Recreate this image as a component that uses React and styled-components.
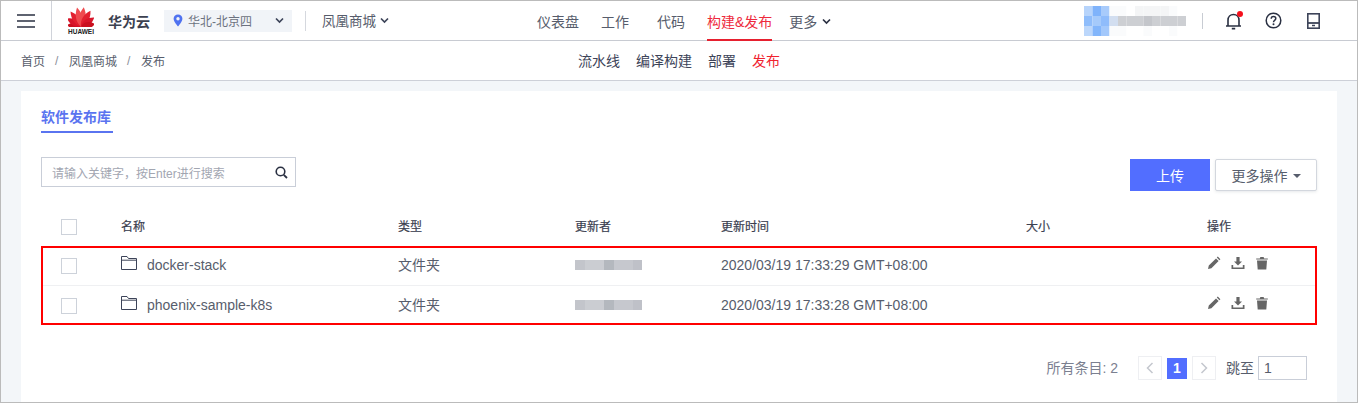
import React from 'react';
import styled, { createGlobalStyle } from 'styled-components';

const Global = createGlobalStyle`
  html, body { margin: 0; padding: 0; background: #fff; }
  * { box-sizing: border-box; }
  body { font-family: "Liberation Sans", "Noto Sans CJK SC", sans-serif; color: #575d6c; }
`;

const Page = styled.div`
  position: relative; width: 1358px; height: 403px; overflow: hidden;
  border: 1px solid #bbbbbb;
  background: #f3f6f9; display: flex; flex-direction: column;
`;
const TopBar = styled.header`
  height: 40px; flex: none; background: #fff; border-bottom: 1px solid #c8cbd2; display: flex; align-items: center;
`;
const MenuCell = styled.div`
  width: 51px; height: 39px; border-right: 1px solid #d0d3da; display: flex; align-items: center; justify-content: center; flex: none;
`;
const LeftZone = styled.div`
  width: 485px; flex: none; display: flex; align-items: center; padding-left: 16px;
`;
const Logo = styled.div`
  width: 26px; display: flex; flex-direction: column; align-items: center; margin-top: 1px;
`;
const LogoWord = styled.span`
  font-size: 6.5px; line-height: 7px; font-weight: 700; color: #222; margin-top: 1px; white-space: nowrap;
`;
const Brand = styled.span`
  font-size: 14px; font-weight: 700; color: #3c4150; margin-left: 14px; width: 56px;
`;
const Region = styled.div`
  width: 128px; height: 22px; background: #f1f4f8; display: flex; align-items: center; padding: 0 8px 0 9px;
  font-size: 12px; color: #6c7280; gap: 5px;
`;
const RegionName = styled.span`flex: 1;`;
const VLine = styled.span`
  width: 1px; height: 20px; background: #d5d8de; margin-left: 13px; flex: none;
`;
const Project = styled.div`
  margin-left: 16px; font-size: 13.5px; color: #575d6c; display: flex; align-items: center; gap: 4px; padding-bottom: 1px;
`;
const MainNav = styled.nav`
  display: flex; align-items: stretch; height: 39px; flex: none;
`;
const NavItem = styled.a`
  font-size: 14px; margin-right: ${p => p.$gap}px; color: ${p => p.$active ? '#ee2a3d' : '#575d6c'};
  display: flex; align-items: center; gap: 5px; white-space: nowrap; height: 40px; padding-top: 2px;
  border-bottom: 2px solid ${p => p.$active ? '#e6202f' : 'transparent'};
`;
const RightZone = styled.div`
  margin-left: auto; display: flex; align-items: center; padding-right: 34px;
`;
const Mosaic = styled.svg`display: block; flex: none;`;
const RightLine = styled.span`width: 1px; height: 16px; background: #c8ccd3; margin: 0 20px 0 16px;`;
const IconSlot = styled.span`
  position: relative; width: 20px; height: 20px; margin-right: ${p => p.$gap || 0}px; display: flex; align-items: center; justify-content: center;
`;
const Dot = styled.i`
  position: absolute; top: 0px; right: 0px; width: 6px; height: 6px; border-radius: 50%; background: #f5101c;
`;
const SubBar = styled.div`
  height: 40px; flex: none; background: #fff; border-bottom: 1px solid #cdd0d8; display: flex; align-items: center;
`;
const Crumbs = styled.div`
  width: 577px; padding-left: 20px; flex: none; display: flex; align-items: center; font-size: 12px; color: #575d6c; gap: 10px;
`;
const Sep = styled.span`color: #8a8e99; width: 4px;`;
const SubNav = styled.div`display: flex; gap: 16px; font-size: 14px; color: #3d4459; padding-bottom: 2px;`;
const SubItem = styled.span`color: ${p => p.$active ? '#f0222f' : '#3d4459'};`;
const Card = styled.main`
  margin: 10px 20px 0; background: #fff; flex: 1; padding: 0 20px; display: flex; flex-direction: column;
`;
const Tabs = styled.div`height: 42px; display: flex; align-items: flex-end;`;
const Tab = styled.div`
  width: 72px; height: 32px; padding-top: 6px; font-size: 14px; font-weight: 700; line-height: 20px;
  color: #5a74f0; border-bottom: 2px solid #5a74f0; white-space: nowrap;
`;
const Tools = styled.div`
  display: flex; justify-content: space-between; align-items: flex-start; margin-top: 24px; height: 50px;
`;
const Search = styled.div`
  width: 255px; height: 30px; border: 1px solid #c9ced8; display: flex; align-items: center; justify-content: space-between;
  padding: 0 7px 0 10px; font-size: 12px; color: #a2a6b1;
`;
const Actions = styled.div`display: flex; gap: 5px; margin-top: 2px;`;
const Upload = styled.button`
  width: 80px; height: 32px; background: #526eff; border: 0; color: #fff; font: inherit; font-size: 14px; padding: 0;
`;
const More = styled.button`
  width: 102px; height: 32px; background: #fff; border: 1px solid #d3d7de; border-radius: 2px; color: #575d6c; font: inherit; font-size: 14px; padding: 0;
  display: flex; align-items: center; justify-content: center; gap: 5px; box-shadow: 0 1px 3px rgba(60,70,90,.12);
`;
const Caret = styled.i`
  border-left: 4px solid transparent; border-right: 4px solid transparent; border-top: 4px solid #575d6c; margin-top: 2px;
`;
const Row = styled.div`
  display: grid; grid-template-columns: 80px 277px 177px 146px 305px 181px 110px; align-items: center;
  height: ${p => p.$h}px; font-size: 14px; color: #575d6c;
  ${p => p.$line && 'border-bottom: 1px solid #eff0f2;'}
`;
const HeadCell = styled.div`font-size: 12px; color: #3b4050; -webkit-text-stroke: .2px #3b4050; margin-top: -2px;`;
const BodyCell = styled.div`margin-top: ${p => p.$cjk ? -4 : -2}px;`;
const Check = styled.span`
  display: block; width: 16px; height: 16px; border: 1px solid #cdd2da; margin-left: 20px; background: #fff;
`;
const NameCell = styled.div`display: flex; align-items: center; gap: 10px; margin-top: -2px;`;
const FolderGlyph = styled.svg`margin-top: -4px; flex: none;`;
const OpIcons = styled.div`display: flex; gap: 10px; margin-top: -6px; align-items: center;`;
const Pager = styled.div`
  margin-top: 31px; display: flex; align-items: center; justify-content: flex-end; padding-right: 10px; font-size: 14px; color: #7b8090;
`;
const Total = styled.span`margin: -2px 20px 0 0; font-size: 14px;`;
const PageBtn = styled.span`
  width: 24px; height: 24px; border: 1px solid #eeeff2; display: flex; align-items: center; justify-content: center;
`;
const PageNow = styled.span`
  width: 20px; height: 21px; background: #526eff; color: #fff; font-weight: 700; font-size: 14px; margin: 0 5px; display: flex; align-items: center; justify-content: center;
`;
const JumpLabel = styled.span`margin: -2px 4px 0 10px; color: #575d6c;`;
const JumpBox = styled.span`
  width: 49px; height: 24px; border: 1px solid #c9ced8; display: flex; align-items: center; padding-left: 5px; color: #575d6c; font-size: 14px;
`;
const Annotation = styled.div`
  position: absolute; left: 40px; top: 245px; width: 1276px; height: 79px; border: 2px solid #ff0000; pointer-events: none;
`;

const Chevron = ({ color = '#3d4459' }) => (
  <svg width="9" height="7" viewBox="0 0 9 7" fill="none"><path d="M1 1.500 4.500 5 8 1.500" stroke={color} strokeWidth="1.700" /></svg>
);

const petals = [
  [-82, .72, '#c9101f'], [-58, .82, '#d8152a'], [-33, .94, '#e2202f'], [-10, 1, '#ef4a4e'],
  [10, 1, '#ef4a4e'], [33, .94, '#e2202f'], [58, .82, '#d8152a'], [82, .72, '#c9101f'],
];
const Petals = () => (
  <svg width="26" height="20" viewBox="0 0 26 20">
    {petals.map(([a, k, c]) => (
      <path key={a} transform={`translate(13 19.500) rotate(${a}) scale(1 ${k})`} d="M0 0C-4.600-5.500-4.200-13-.6-19.500 3.800-13 4.600-5.500 0 0Z" fill={c} />
    ))}
  </svg>
);

const Blur = ({ w, h, cw, ch, rows }) => (
  <Mosaic width={w} height={h} viewBox={`0 0 ${w} ${h}`}>
    {rows.map((r, y) => r.map((c, x) => <rect key={`${x}-${y}`} x={x * cw} y={y * ch} width={cw} height={ch} fill={c} />))}
  </Mosaic>
);

const w = '#ffffff', s = '#fafbfc', t = '#f4f5f6', g = '#cdcfd3', h = '#c4c6cb';
const userRows = [
  ['#b7d4fb', '#7fb3fb', '#a8cbfb', s, s, w, t, t, t, t, s, w],
  ['#8fbdfb', '#a5cafb', '#8fbcfb', '#d2def0', g, g, g, h, g, g, g, g],
  ['#bcd7fb', '#83b6fb', '#a3c8fb', s, s, w, w, s, w, w, s, w],
];

const nameBands = [['#c3c5cb', 10], ['#cbcdd2', 19], ['#b4b8be', 10], ['#c6c8ce', 19], ['#bfc1c8', 9]];
const NameBlur = () => {
  let x = 0;
  return (
    <Mosaic width="67" height="10" viewBox="0 0 67 10">
      {nameBands.map(([c, wd]) => {
        const r = <rect key={x} x={x} y="0" width={wd} height="10" fill={c} />;
        x += wd;
        return r;
      })}
    </Mosaic>
  );
};

const Folder = () => (
  <FolderGlyph width="16" height="14" viewBox="0 0 16 14" fill="none">
    <path d="M.5 13.500V.5h5.500l1.500 2h8v11z M.5 4.200h15" stroke="#3d4459" strokeWidth="1" />
  </FolderGlyph>
);
const Pencil = () => (
  <svg width="14" height="14" viewBox="0 0 14 14"><path d="M1 13l.8-3.400L9 2.400l2.600 2.600-7.200 7.200zM9.800 1.600l1-1 2.600 2.600-1 1z" fill="#666" /></svg>
);
const Download = () => (
  <svg width="14" height="14" viewBox="0 0 14 14"><path d="M5.400 1h3.200v4.400H11L7 9.400 3 5.400h2.400z M.5 9h1.700v2.600h9.600V9h1.700v4H.5z" fill="#666" /></svg>
);
const Trash = () => (
  <svg width="14" height="14" viewBox="0 0 14 14"><path d="M2 4.400h10l-.7 9.100H2.700z M1.200 2.400h3.600L5.400 1h3.200l.6 1.400h3.600v1.200H1.200z" fill="#666" /></svg>
);
const Ops = () => <OpIcons><Pencil /><Download /><Trash /></OpIcons>;

const TableRow = ({ name, time, line }) => (
  <Row $h={line ? 40 : 39} $line={line}>
    <Check />
    <NameCell><Folder />{name}</NameCell>
    <BodyCell $cjk>文件夹</BodyCell>
    <BodyCell><NameBlur /></BodyCell>
    <BodyCell>{time}</BodyCell>
    <div />
    <Ops />
  </Row>
);

export default function App() {
  return (
    <Page>
      <Global />
      <TopBar>
        <MenuCell>
          <svg width="18" height="14" viewBox="0 0 18 14"><path d="M0 1h18M0 7h18M0 13h18" stroke="#2a3042" strokeWidth="1.600" /></svg>
        </MenuCell>
        <LeftZone>
          <Logo><Petals /><LogoWord>HUAWEI</LogoWord></Logo>
          <Brand>华为云</Brand>
          <Region>
            <svg width="10" height="13" viewBox="0 0 10 13"><path d="M5 .5C2.400.5.6 2.400.6 4.800.6 7.800 5 12.500 5 12.500s4.400-4.700 4.400-7.700C9.400 2.400 7.600.5 5 .5z" fill="#4f72f0" /><circle cx="5" cy="4.800" r="1.700" fill="#f1f4f8" /></svg>
            <RegionName>华北-北京四</RegionName>
            <Chevron />
          </Region>
          <VLine />
          <Project>凤凰商城<Chevron /></Project>
        </LeftZone>
        <MainNav>
          <NavItem $gap={22}>仪表盘</NavItem>
          <NavItem $gap={28}>工作</NavItem>
          <NavItem $gap={22}>代码</NavItem>
          <NavItem $gap={17} $active>构建&amp;发布</NavItem>
          <NavItem $gap={0}>更多<Chevron color="#2a3042" /></NavItem>
        </MainNav>
        <RightZone>
          <Blur w={102} h={30} cw={8.5} ch={10} rows={userRows} />
          <RightLine />
          <IconSlot $gap={20}>
            <svg width="17" height="18" viewBox="0 0 17 18" fill="none"><path d="M1 14h15M3 14V8.200C3 4.800 5.400 2.500 8.500 2.500S14 4.800 14 8.200V14M6.800 16.600h3.400" stroke="#2a3042" strokeWidth="1.600" /></svg>
            <Dot />
          </IconSlot>
          <IconSlot $gap={20}>
            <svg width="17" height="17" viewBox="0 0 17 17" fill="none"><circle cx="8.500" cy="8.500" r="7.300" stroke="#2a3042" strokeWidth="1.500" /><path d="M6.200 6.800C6.200 5.400 7.200 4.600 8.500 4.600s2.300.8 2.300 2c0 1.900-2.300 1.800-2.300 3.600" stroke="#2a3042" strokeWidth="1.500" /><circle cx="8.500" cy="12.300" r="1" fill="#2a3042" /></svg>
          </IconSlot>
          <IconSlot>
            <svg width="13" height="16" viewBox="0 0 13 16" fill="none"><rect x=".8" y=".8" width="11.400" height="14.400" stroke="#3d4459" strokeWidth="1.600" /><path d="M1 10h11" stroke="#3d4459" strokeWidth="1.800" /><path d="M5 12.500h3" stroke="#3d4459" strokeWidth="1.500" /></svg>
          </IconSlot>
        </RightZone>
      </TopBar>
      <SubBar>
        <Crumbs>
          <span>首页</span><Sep>/</Sep><span>凤凰商城</span><Sep>/</Sep><span>发布</span>
        </Crumbs>
        <SubNav>
          <SubItem>流水线</SubItem>
          <SubItem>编译构建</SubItem>
          <SubItem>部署</SubItem>
          <SubItem $active>发布</SubItem>
        </SubNav>
      </SubBar>
      <Card>
        <Tabs><Tab>软件发布库</Tab></Tabs>
        <Tools>
          <Search>
            <span>请输入关键字，按Enter进行搜索</span>
            <svg width="13" height="13" viewBox="0 0 13 13" fill="none"><circle cx="5.500" cy="5.500" r="4.300" stroke="#2a3042" strokeWidth="1.600" /><path d="M8.800 8.800 12 12" stroke="#2a3042" strokeWidth="1.800" /></svg>
          </Search>
          <Actions>
            <Upload>上传</Upload>
            <More>更多操作<Caret /></More>
          </Actions>
        </Tools>
        <Row $h={39}>
          <Check />
          <HeadCell>名称</HeadCell>
          <HeadCell>类型</HeadCell>
          <HeadCell>更新者</HeadCell>
          <HeadCell>更新时间</HeadCell>
          <HeadCell>大小</HeadCell>
          <HeadCell>操作</HeadCell>
        </Row>
        <TableRow name="docker-stack" time="2020/03/19 17:33:29 GMT+08:00" line />
        <TableRow name="phoenix-sample-k8s" time="2020/03/19 17:33:28 GMT+08:00" />
        <Pager>
          <Total>所有条目: 2</Total>
          <PageBtn><svg width="8" height="12" viewBox="0 0 8 12" fill="none"><path d="M6.500 1 1.500 6l5 5" stroke="#c4c7ce" strokeWidth="1.500" /></svg></PageBtn>
          <PageNow>1</PageNow>
          <PageBtn><svg width="8" height="12" viewBox="0 0 8 12" fill="none"><path d="M1.500 1l5 5-5 5" stroke="#c4c7ce" strokeWidth="1.500" /></svg></PageBtn>
          <JumpLabel>跳至</JumpLabel>
          <JumpBox>1</JumpBox>
        </Pager>
      </Card>
      <Annotation />
    </Page>
  );
}
